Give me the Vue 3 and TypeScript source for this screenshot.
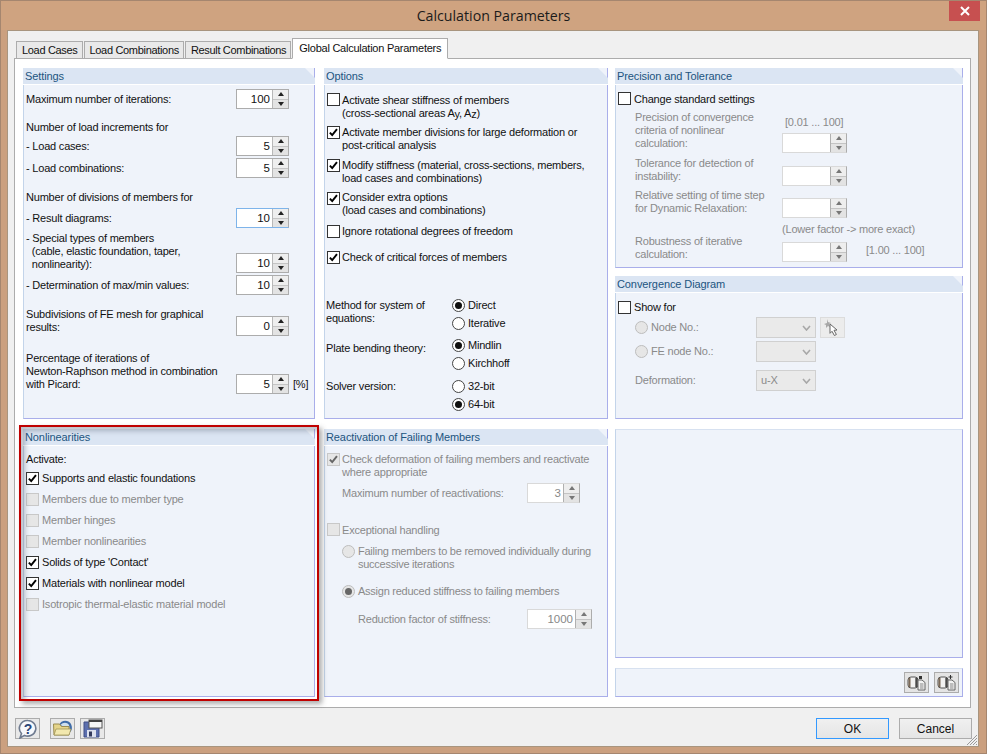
<script setup lang="ts">
const tabs = ['Load Cases', 'Load Combinations', 'Result Combinations']
const nonlin: { text: string; on: boolean }[] = [
  { text: 'Supports and elastic foundations', on: true },
  { text: 'Members due to member type', on: false },
  { text: 'Member hinges', on: false },
  { text: 'Member nonlinearities', on: false },
  { text: "Solids of type 'Contact'", on: true },
  { text: 'Materials with nonlinear model', on: true },
  { text: 'Isotropic thermal-elastic material model', on: false },
]
</script>

<template>
  <div class="win">
    <svg class="defs" aria-hidden="true">
      <symbol id="chk" viewBox="0 0 13 13"><path d="M2.2 6.6 5 9.6 10.6 2.6" fill="none" stroke="currentColor" stroke-width="2.3" /></symbol>
    </svg>
    <header class="title">
      <span class="title-text">Calculation Parameters</span>
      <span class="close"><svg width="10" height="10" viewBox="0 0 10 10"><path d="M1 1 9 9M9 1 1 9" stroke="#fff" stroke-width="2" /></svg></span>
    </header>
    <div class="client">
      <nav class="tabs">
        <span v-for="t in tabs" :key="t" class="tab">{{ t }}</span>
        <span class="tab active">Global Calculation Parameters</span>
      </nav>
      <main class="page">
        <!-- left column -->
        <div class="col c1">
          <section class="panel h351">
            <h3>Settings</h3>
            <div class="body settings">
              <div class="srow mt4"><span>Maximum number of iterations:</span><span class="spin"><span class="val">100</span><span class="btns"><i class="up"></i><i class="dn"></i></span></span></div>
              <div class="srow mt11 t"><span>Number of load increments for</span></div>
              <div class="srow mt2"><span>- Load cases:</span><span class="spin"><span class="val">5</span><span class="btns"><i class="up"></i><i class="dn"></i></span></span></div>
              <div class="srow mt2"><span>- Load combinations:</span><span class="spin"><span class="val">5</span><span class="btns"><i class="up"></i><i class="dn"></i></span></span></div>
              <div class="srow mt12 t"><span>Number of divisions of members for</span></div>
              <div class="srow mt4"><span>- Result diagrams:</span><span class="spin focus"><span class="val">10</span><span class="btns"><i class="up"></i><i class="dn"></i></span></span></div>
              <div class="srow mt3 top h42"><span class="lab3">- Special types of members<br />&nbsp;&nbsp;(cable, elastic foundation, taper,<br />&nbsp;&nbsp;nonlinearity):</span><span class="spin"><span class="val">10</span><span class="btns"><i class="up"></i><i class="dn"></i></span></span></div>
              <div class="srow mt2"><span>- Determination of max/min values:</span><span class="spin"><span class="val">10</span><span class="btns"><i class="up"></i><i class="dn"></i></span></span></div>
              <div class="srow mt12 top h29"><span class="lab3">Subdivisions of FE mesh for graphical<br />results:</span><span class="spin"><span class="val">0</span><span class="btns"><i class="up"></i><i class="dn"></i></span></span></div>
              <div class="srow mt15 top h43"><span class="lab3">Percentage of iterations of<br />Newton-Raphson method in combination<br />with Picard:</span><span class="spin"><span class="val">5</span><span class="btns"><i class="up"></i><i class="dn"></i></span></span><span class="unit">[%]</span></div>
            </div>
          </section>
          <section class="panel h267 gap10">
            <h3>Nonlinearities</h3>
            <div class="body">
              <div class="activate">Activate:</div>
              <label v-for="n in nonlin" :key="n.text" class="nl" :class="{ off: !n.on }">
                <span class="cb"><svg v-if="n.on" class="ck"><use href="#chk" /></svg></span>{{ n.text }}
              </label>
            </div>
            <div class="highlight"></div>
          </section>
        </div>
        <!-- middle column -->
        <div class="col c2">
          <section class="panel h351">
            <h3>Options</h3>
            <div class="body">
              <label class="opt o1"><span class="cb"></span><span>Activate shear stiffness of members<br />(cross-sectional areas A<span class="sub">y</span>, A<span class="sub">z</span>)</span></label>
              <label class="opt o2"><span class="cb"><svg class="ck"><use href="#chk" /></svg></span><span>Activate member divisions for large deformation or<br />post-critical analysis</span></label>
              <label class="opt o2"><span class="cb"><svg class="ck"><use href="#chk" /></svg></span><span>Modify stiffness (material, cross-sections, members,<br />load cases and combinations)</span></label>
              <label class="opt o2 up1"><span class="cb"><svg class="ck"><use href="#chk" /></svg></span><span>Consider extra options<br />(load cases and combinations)</span></label>
              <label class="opt o2 h13"><span class="cb"></span><span>Ignore rotational degrees of freedom</span></label>
              <label class="opt o4 h13"><span class="cb"><svg class="ck"><use href="#chk" /></svg></span><span>Check of critical forces of members</span></label>
              <div class="choice c-a"><span class="ch-lab">Method for system of<br />equations:</span><span class="rads"><label class="rad"><span class="rb on"></span>Direct</label><label class="rad"><span class="rb"></span>Iterative</label></span></div>
              <div class="choice c-b"><span class="ch-lab">Plate bending theory:</span><span class="rads"><label class="rad"><span class="rb on"></span>Mindlin</label><label class="rad"><span class="rb"></span>Kirchhoff</label></span></div>
              <div class="choice c-c"><span class="ch-lab">Solver version:</span><span class="rads"><label class="rad"><span class="rb"></span>32-bit</label><label class="rad"><span class="rb on"></span>64-bit</label></span></div>
            </div>
          </section>
          <section class="panel h267 gap10">
            <h3>Reactivation of Failing Members</h3>
            <div class="body off">
              <label class="opt r1"><span class="cb"><svg class="ck"><use href="#chk" /></svg></span><span>Check deformation of failing members and reactivate<br />where appropriate</span></label>
              <div class="rr r2"><span>Maximum number of reactivations:</span><span class="spin dis"><span class="val">3</span><span class="btns"><i class="up"></i><i class="dn"></i></span></span></div>
              <label class="opt r3 h13"><span class="cb"></span><span>Exceptional handling</span></label>
              <label class="rad2 r4"><span class="rb"></span><span>Failing members to be removed individually during<br />successive iterations</span></label>
              <label class="rad2 r5"><span class="rb on"></span><span>Assign reduced stiffness to failing members</span></label>
              <div class="rr r6"><span>Reduction factor of stiffness:</span><span class="spin dis wide"><span class="val">1000</span><span class="btns"><i class="up"></i><i class="dn"></i></span></span></div>
            </div>
          </section>
        </div>
        <!-- right column -->
        <div class="col c3">
          <section class="panel h200">
            <h3>Precision and Tolerance</h3>
            <div class="body">
              <label class="opt p0 h13"><span class="cb"></span><span>Change standard settings</span></label>
              <div class="off prec">
                <div class="prow p1"><span class="plab">Precision of convergence<br />criteria of nonlinear<br />calculation:</span><span class="pright"><span class="range">[0.01 ... 100]</span><span class="spin dis wide"><span class="val"></span><span class="btns"><i class="up"></i><i class="dn"></i></span></span></span></div>
                <div class="prow p2"><span class="plab">Tolerance for detection of<br />instability:</span><span class="spin dis wide"><span class="val"></span><span class="btns"><i class="up"></i><i class="dn"></i></span></span></div>
                <div class="prow p3"><span class="plab">Relative setting of time step<br />for Dynamic Relaxation:</span><span class="spin dis wide"><span class="val"></span><span class="btns"><i class="up"></i><i class="dn"></i></span></span></div>
                <div class="lower">(Lower factor -&gt; more exact)</div>
                <div class="prow p4"><span class="plab">Robustness of iterative<br />calculation:</span><span class="spin dis wide"><span class="val"></span><span class="btns"><i class="up"></i><i class="dn"></i></span></span><span class="range2">[1.00 ... 100]</span></div>
              </div>
            </div>
          </section>
          <section class="panel h143 gap8">
            <h3>Convergence Diagram</h3>
            <div class="body">
              <label class="opt p00"><span class="cb"></span><span>Show for</span></label>
              <div class="off">
                <div class="crow k1"><label class="rad3"><span class="rb"></span>Node No.:</label><span class="sel"><span></span><svg width="9" height="6" viewBox="0 0 9 6"><path d="M1 1 4.5 5 8 1" fill="none" stroke="#a8a8a8" stroke-width="1.6" /></svg></span>
                  <span class="pick"><svg width="18" height="18" viewBox="0 0 18 18"><path d="M3 0l1 3 3 1-2 1 1 3-2-1-2 2 0-3-2-1 3-1z" fill="#a8a8a8" /><path d="M6 5l7 6-3 .3 2.4 4.2-2 1L8 12.300l-2 2z" fill="#fff" stroke="#666" stroke-width="1" /></svg></span>
                </div>
                <div class="crow k2"><label class="rad3"><span class="rb"></span>FE node No.:</label><span class="sel"><span></span><svg width="9" height="6" viewBox="0 0 9 6"><path d="M1 1 4.5 5 8 1" fill="none" stroke="#a8a8a8" stroke-width="1.6" /></svg></span></div>
                <div class="crow k3"><span class="rad3">Deformation:</span><span class="sel"><span>u-X</span><svg width="9" height="6" viewBox="0 0 9 6"><path d="M1 1 4.5 5 8 1" fill="none" stroke="#a8a8a8" stroke-width="1.6" /></svg></span></div>
              </div>
            </div>
          </section>
          <section class="panel plain h230 gap10"></section>
          <section class="panel plain toolbar gap10">
            <span class="tbtn"><svg width="19" height="16" viewBox="0 0 19 16"><rect x="1" y="2" width="10" height="11" rx="3" fill="#f2f2f2" stroke="#555" /><path d="M2.500 3v9" stroke="#7c6a58" stroke-width="2" /><path d="M9.500 3v9" stroke="#4a4a4a" stroke-width="2.400" /><path d="M11 5h4l3 2.500V15h-7z" fill="#f2f2f2" stroke="#666" /><path d="M13 9h3.500M13 11h3.500M13 13h3.500" stroke="#888" /><rect x="12" y="1" width="3" height="3" fill="#333" /></svg></span>
            <span class="tbtn"><svg width="19" height="16" viewBox="0 0 19 16"><rect x="1" y="2" width="10" height="11" rx="3" fill="#f2f2f2" stroke="#555" /><path d="M2.500 3v9" stroke="#7c6a58" stroke-width="2" /><path d="M9.500 3v9" stroke="#4a4a4a" stroke-width="2.400" /><path d="M11 5h4l3 2.500V15h-7z" fill="#f2f2f2" stroke="#666" /><path d="M13 9h3.500M13 11h3.500M13 13h3.500" stroke="#888" /><path d="M13.500 0v4M11.500 2h4" stroke="#333" /></svg></span>
          </section>
        </div>
      </main>
      <footer class="foot">
        <span class="fbtn"><svg width="21" height="20" viewBox="0 0 21 20"><path d="M11 1.500a8 7.800 0 1 1-3.500 14.900L3 19l1.500-4.500A8 7.800 0 0 1 11 1.500z" fill="#f6f8fc" stroke="#6f7b90" stroke-width="1.600" /><text x="11" y="14.500" text-anchor="middle" class="q">?</text></svg></span>
        <span class="fbtn m10"><svg width="21" height="19" viewBox="0 0 21 19"><path d="M7 6C9 1 16 0 19 5c1.500 3 1 6-.500 8z" fill="#3f6ca8" /><path d="M8.500 6C11 3 15 3 17 6l1 5z" fill="#cfe0ef" /><path d="M1.500 5h6l2 2.500h7.500V16H2z" fill="#e5d48a" stroke="#9a8c50" /><path d="M2 16l2-6h15l-2 6z" fill="#f2e8ae" stroke="#9a8c50" stroke-width=".700" /></svg></span>
        <span class="fbtn m5"><svg width="20" height="19" viewBox="0 0 20 19"><path d="M1 3h15v15H1z" fill="#5c6fae" stroke="#414f86" /><rect x="4" y="11" width="9" height="7" fill="#dde1ee" /><rect x="6" y="12.500" width="3" height="5" fill="#333a5c" /><rect x="6" y="1" width="13" height="8" fill="#f6f6f6" stroke="#555" /><rect x="6" y="1" width="13" height="2" fill="#444" /></svg></span>
        <span class="spacer"></span>
        <button class="btn ok">OK</button>
        <button class="btn">Cancel</button>
      </footer>
      <svg class="grip" width="12" height="12" viewBox="0 0 12 12"><path d="M11 1 1 11M11 4 4 11M11 7 7 11M11 10 10 11" stroke="#9a9a9a" /></svg>
    </div>
  </div>
</template>

<style scoped>
.win { width: 987px; height: 754px; box-sizing: border-box; background: #cba07f; border: 1px solid #a5866f; display: flex; flex-direction: column; font: 11px/13px "Liberation Sans", Arial, sans-serif; letter-spacing: -.2px; color: #111; overflow: hidden; position: relative; }
.defs { position: absolute; width: 0; height: 0; }
.title { height: 29px; flex: none; position: relative; display: flex; justify-content: center; align-items: center; background: #cfa380; }
.title-text { font: 14.2px "Open Sans", sans-serif; letter-spacing: 0; color: #1b1b1b; }
.close { position: absolute; right: 6px; top: 0; width: 31px; height: 20px; background: #c75050; display: flex; align-items: center; justify-content: center; }
.client { flex: none; width: 972px; height: 717px; margin-left: 6px; box-sizing: border-box; background: #f0f0f0; border: 1px solid #a8957f; padding: 7px 6px 0 6px; position: relative; }
.tabs { display: flex; align-items: flex-end; height: 21px; padding-left: 2px; position: relative; z-index: 1; margin-bottom: -1px; }
.tab { height: 18px; box-sizing: border-box; border: 1px solid #acacac; background: #e9e9e9; padding: 2px 4px 0 5px; margin-right: 1px; color: #111; white-space: nowrap; letter-spacing: -.32px; }
.tab.active { height: 21px; background: #fff; border-bottom-color: #fff; padding: 3px 6px 0 6px; margin: 0; letter-spacing: -.25px; }
.page { height: 650px; width: 957px; box-sizing: border-box; background: #fff; border: 1px solid #acacac; padding: 9px 7px 9px 8px; display: flex; }
.col { display: flex; flex-direction: column; flex: none; }
.c1 { width: 292px; }
.c2 { width: 284px; margin-left: 9px; }
.c3 { width: 348px; margin-left: 7px; }
.panel { position: relative; background: #eff3fa; border: 1px solid #a9aeea; border-top: 0; box-sizing: border-box; border-left-color: #c3d4ea; display: flex; flex-direction: column; }
.panel > .body { flex: 1; padding: 0 0 0 2px; }
.panel > h3 { margin: 0 -1px; height: 17px; box-sizing: border-box; font: 11px/16px "Liberation Sans", Arial, sans-serif; letter-spacing: -.1px; color: #215480; background: #dbe5f3; padding-left: 2px; border-bottom: 1px solid #fff; flex: none; clip-path: polygon(0 0, calc(100% - 10px) 0, 100% 10px, 100% 100%, 0 100%); }
.h351 { height: 351px; }
.h267 { height: 268px; }
.h200 { height: 200px; }
.h143 { height: 143px; }
.h230 { height: 229px; }
.gap10 { margin-top: 10px; }
.gap8 { margin-top: 8px; }
.plain { border-top: 1px solid #d7e1f0; }
.toolbar { height: 29px; flex-direction: row; justify-content: flex-end; align-items: center; gap: 5px; padding-right: 3px; }
.tbtn { width: 25px; height: 21px; box-sizing: border-box; border: 1px solid #acacac; background: #e4e4e4; display: flex; align-items: center; justify-content: center; }

/* spinner */
.spin { flex: none; width: 53px; height: 20px; box-sizing: border-box; display: flex; border: 1px solid #acacac; background: #fff; }
.spin.focus { border-color: #7eb4ea; border-right-color: #acacac; }
.val { flex: 1; text-align: right; padding-right: 2px; line-height: 18px; letter-spacing: 0; font-size: 11.5px; }
.btns { width: 15px; flex: none; display: flex; flex-direction: column; background: #eeeeee; border-left: 1px solid #b8b8b8; }
.btns i { flex: 1; display: flex; align-items: center; justify-content: center; position: relative; }
.btns i.dn { border-top: 1px solid #c4c4c4; background: #e3e3e3; }
.btns i::after { content: ""; width: 0; height: 0; border-left: 3.5px solid transparent; border-right: 3.5px solid transparent; }
.btns i.up::after { border-bottom: 4px solid #222; }
.btns i.dn::after { border-top: 4px solid #222; }
.spin.dis { border-color: #d9d9d9; border-right-color: #acacac; }
.spin.dis .btns { border-left: 1px solid #b0b0b0; }
.spin.dis .btns i.up::after { border-bottom-color: #777; }
.spin.dis .btns i.dn::after { border-top-color: #777; }
.spin.dis .val { color: #888; }
.wide { width: 65px; }

/* settings */
.srow { display: flex; align-items: center; min-height: 20px; width: 263px; justify-content: space-between; position: relative; white-space: nowrap; }
.srow.t { min-height: 14px; }
.srow.top { align-items: flex-end; }
.h42 { min-height: 42px; }
.h29 { min-height: 29px; }
.h43 { min-height: 43px; }
.lab3 { align-self: flex-start; margin-top: 1px; }
.unit { position: absolute; left: 267px; bottom: 3px; }
.mt2 { margin-top: 2px; }
.mt3 { margin-top: 3px; }
.mt4 { margin-top: 4px; }
.mt11 { margin-top: 11px; }
.mt12 { margin-top: 12px; }
.mt15 { margin-top: 15px; }

/* check + radio */
.cb { flex: none; width: 13px; height: 13px; box-sizing: border-box; border: 1px solid #333; background: #fff; display: inline-block; position: relative; color: #000; }
.ck { position: absolute; left: 0; top: 0; width: 11px; height: 11px; }
.off .cb, .nl.off .cb { border-color: #c8c8c8; background: #e6e6e6; color: #666; }
.rb { flex: none; width: 13px; height: 13px; box-sizing: border-box; border: 1px solid #444; border-radius: 50%; background: #fff; position: relative; display: inline-block; margin-right: 3px; }
.rb.on::after { content: ""; position: absolute; left: 2px; top: 2px; width: 7px; height: 7px; border-radius: 50%; background: #111; }
.off .rb { border-color: #bdbdbd; background: #e6e6e6; }
.off .rb.on::after { background: #666; }
.off { color: #8a8a8a; }

.activate { margin-top: 6px; height: 15px; line-height: 14px; }
.nl { display: flex; align-items: center; gap: 3px; height: 13px; margin-top: 8px; white-space: nowrap; }
.nl:first-of-type { margin-top: 5px; }
.nl.off { color: #8a8a8a; }
.highlight { position: absolute; z-index: 2; left: -5px; top: -4px; width: 300px; height: 276px; box-sizing: border-box; border: 2px solid #c00000; box-shadow: 3px 3px 5px rgba(70, 70, 70, .45), inset 4px 4px 5px rgba(90, 100, 120, .4); pointer-events: none; }

/* options */
.opt { display: flex; gap: 3px; white-space: nowrap; }
.h13 { height: 13px; }
.c2 .opt { gap: 2px; }
.sub { font-size: 11px; position: relative; top: 1px; }
.o1 { margin-top: 8px; height: 26px; }
.o1 > span:last-child, .p0 > span:last-child, .r3 > span:last-child { margin-top: 1px; }
.up1 { height: 26px; }
.up1 > span:last-child { margin-top: -1px; }
.o2 { margin-top: 7px; }
.o4 { margin-top: 13px; }
.choice { display: flex; margin-left: -1px; }
.ch-lab { width: 126px; flex: none; }
.c-a { margin-top: 35px; }
.c-b { margin-top: 9px; }
.c-c { margin-top: 10px; }
.c-b .ch-lab { margin-top: 3px; }
.rads { display: flex; flex-direction: column; gap: 5px; }
.rad { display: flex; align-items: center; height: 13px; }

/* reactivation */
.r1 { margin-top: 7px; }
.rr { display: flex; justify-content: space-between; align-items: center; margin-left: 15px; white-space: nowrap; }
.r2 { width: 238px; margin-top: 4px; }
.r3 { margin-top: 20px; }
.rad2 { display: flex; margin-left: 15px; white-space: nowrap; letter-spacing: -.25px; }
.r4 { margin-top: 9px; }
.r5 { margin-top: 14px; align-items: center; }
.r6 { width: 234px; margin: 11px 0 0 31px; }

/* precision */
.p0 { margin-top: 7px; }
.p00 { margin-top: 8px; }
.prec { padding-left: 17px; }
.prow { display: flex; white-space: nowrap; position: relative; }
.plab { width: 147px; flex: none; }
.pright { display: flex; flex-direction: column; }
.range { height: 13px; margin: 5px 0 4px 3px; }
.range2 { margin: 9px 0 0 19px; }
.p1 { margin-top: 6px; }
.p2 { margin-top: 4px; }
.p2 .spin { margin-top: 9px; }
.p3 { margin-top: 3px; }
.p3 .spin { margin-top: 9px; }
.lower { margin: 5px 0 0 147px; height: 13px; white-space: nowrap; }
.p4 { margin-top: -1px; }
.p4 .spin { margin-top: 7px; }

/* convergence */
.crow { display: flex; align-items: center; height: 21px; margin-left: 17px; }
.rad3 { width: 121px; flex: none; display: flex; align-items: center; white-space: nowrap; }
.k1 { margin-top: 3px; }
.k2 { margin-top: 3px; }
.k3 { margin-top: 8px; }
.sel { width: 60px; height: 21px; box-sizing: border-box; border: 1px solid #d0d0d0; background: #eaeaea; display: flex; align-items: center; justify-content: space-between; padding: 0 4px; flex: none; }
.pick { width: 25px; height: 21px; box-sizing: border-box; border: 1px solid #dcdcdc; background: #ececec; margin-left: 4px; display: flex; align-items: center; justify-content: center; }

/* footer */
.foot { display: flex; align-items: center; height: 21px; margin-top: 10px; padding-left: 1px; }
.fbtn { width: 25px; height: 21px; box-sizing: border-box; border: 1px solid #acacac; background: #e8e8e8; display: flex; align-items: center; justify-content: center; }
.m10 { margin-left: 10px; }
.m5 { margin-left: 5px; }
.q { font: bold 14px "Liberation Sans", sans-serif; letter-spacing: 0; fill: #2a4478; }
.spacer { flex: 1; }
.btn { width: 73px; height: 21px; box-sizing: border-box; margin: 0 0 0 10px; padding: 0; border: 1px solid #acacac; background: linear-gradient(#f0f0f0, #e5e5e5); font: 12px "Liberation Sans", Arial, sans-serif; color: #111; }
.btn.ok { border-color: #3399ff; }
.grip { position: absolute; right: 0; bottom: 0; }
</style>

<style>
html, body { margin: 0; background: #cba07f; }
</style>
